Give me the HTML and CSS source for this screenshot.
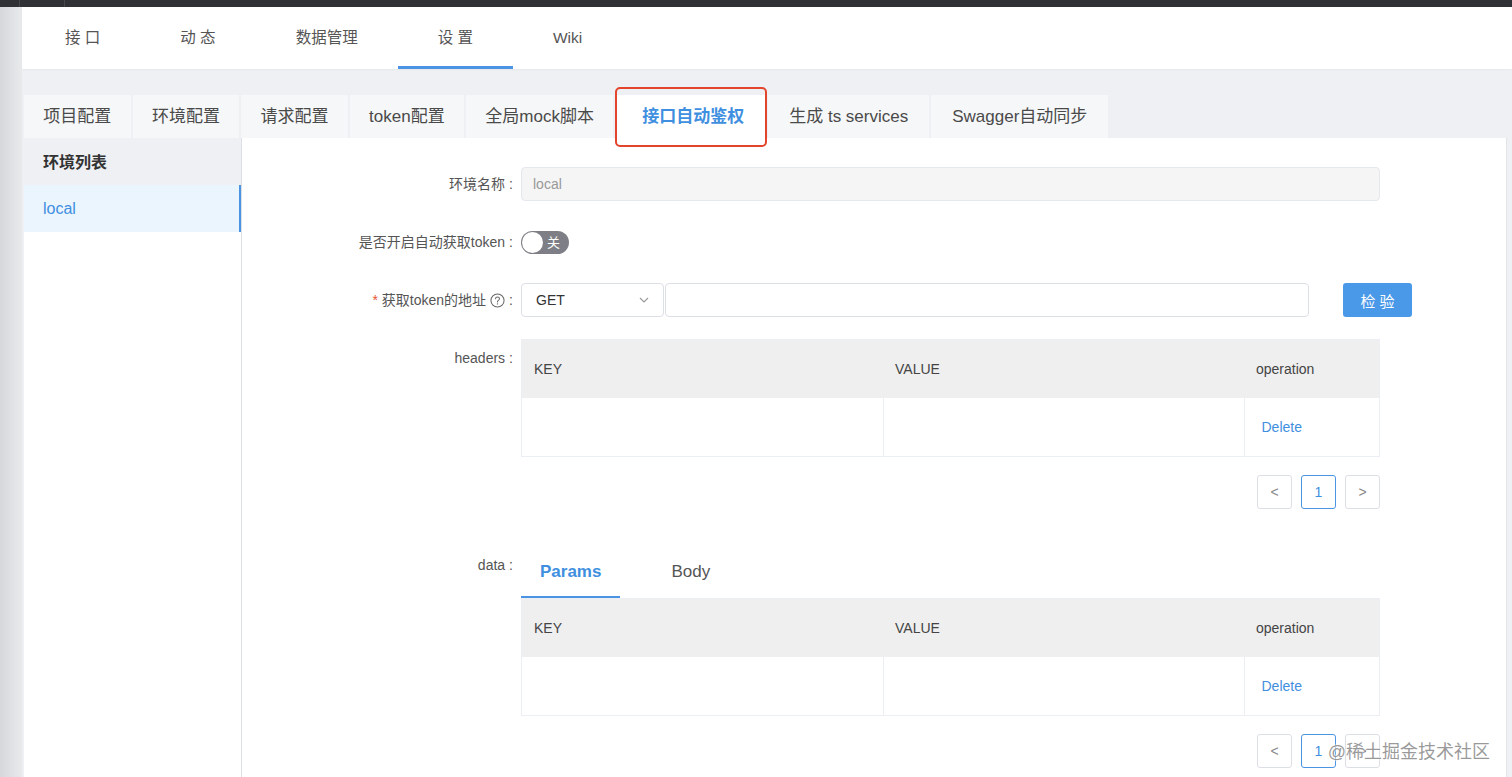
FILE: index.html
```html
<!DOCTYPE html>
<html lang="zh-CN">
<head>
    <meta charset="UTF-8">
    <title>设置 - 接口自动鉴权</title>
    <link rel="stylesheet" href="styles.css">
</head>
<body>

<div class="topbar">
    <span class="topbar-sep s1"></span>
    <span class="topbar-sep s2"></span>
</div>

<div class="frame">
    <div class="strip"></div>
    <div class="main">
        <div class="nav">
            <a class="nav-item">接 口</a>
            <a class="nav-item">动 态</a>
            <a class="nav-item">数据管理</a>
            <a class="nav-item active">设 置</a>
            <a class="nav-item">Wiki</a>
        </div>

        <div class="settings">
            <div class="tabs">
                <div class="tab">项目配置</div>
                <div class="tab">环境配置</div>
                <div class="tab">请求配置</div>
                <div class="tab">token配置</div>
                <div class="tab">全局mock脚本</div>
                <div class="tab active">接口自动鉴权<span class="mark"></span></div>
                <div class="tab wide">生成 ts services</div>
                <div class="tab wide">Swagger自动同步</div>
            </div>

            <div class="panel">
                <div class="env-list">
                    <div class="env-head">环境列表</div>
                    <div class="env-item selected">local</div>
                </div>

                <div class="form">
                    <div class="form-item">
                        <label class="form-label">环境名称<span class="colon">:</span></label>
                        <div class="form-control">
                            <div class="input disabled">local</div>
                        </div>
                    </div>

                    <div class="form-item">
                        <label class="form-label">是否开启自动获取token<span class="colon">:</span></label>
                        <div class="form-control">
                            <div class="switch">
                                <span class="switch-knob"></span>
                                <span class="switch-text">关</span>
                            </div>
                        </div>
                    </div>

                    <div class="form-item url-item">
                        <label class="form-label"><span class="required">*</span> 获取token的地址
                            <svg class="help" width="15" height="15" viewBox="0 0 16 16">
                                <circle cx="8" cy="8" r="7" fill="none" stroke="#666" stroke-width="1.1"/>
                                <path d="M5.9 6.2c0-1.2.9-2 2.1-2s2.1.8 2.1 1.9c0 .9-.5 1.3-1.2 1.8-.6.4-.9.7-.9 1.4v.4" fill="none" stroke="#666" stroke-width="1.1" stroke-linecap="round"/>
                                <circle cx="8" cy="11.6" r=".75" fill="#666"/>
                            </svg><span class="colon">:</span></label>
                        <div class="form-control url-row">
                            <div class="select">
                                <span>GET</span>
                                <svg width="12" height="12" viewBox="0 0 12 12"><path d="M2 4l4 4 4-4" fill="none" stroke="#999" stroke-width="1.1"/></svg>
                            </div>
                            <div class="input url"></div>
                            <button class="btn-primary">检 验</button>
                        </div>
                    </div>

                    <div class="form-item">
                        <label class="form-label top">headers<span class="colon">:</span></label>
                        <div class="form-control">
                            <table class="kv-table">
                                <thead>
                                    <tr><th class="c-key">KEY</th><th class="c-val">VALUE</th><th class="c-op">operation</th></tr>
                                </thead>
                                <tbody>
                                    <tr><td></td><td></td><td><a class="link">Delete</a></td></tr>
                                </tbody>
                            </table>
                            <div class="pager">
                                <span class="page-btn">&lt;</span>
                                <span class="page-btn current">1</span>
                                <span class="page-btn">&gt;</span>
                            </div>
                        </div>
                    </div>

                    <div class="form-item data-item">
                        <label class="form-label top">data<span class="colon">:</span></label>
                        <div class="form-control">
                            <div class="sub-tabs">
                                <div class="sub-tab active">Params</div>
                                <div class="sub-tab">Body</div>
                            </div>
                            <table class="kv-table">
                                <thead>
                                    <tr><th class="c-key">KEY</th><th class="c-val">VALUE</th><th class="c-op">operation</th></tr>
                                </thead>
                                <tbody>
                                    <tr><td></td><td></td><td><a class="link">Delete</a></td></tr>
                                </tbody>
                            </table>
                            <div class="pager">
                                <span class="page-btn">&lt;</span>
                                <span class="page-btn current">1</span>
                                <span class="page-btn">&gt;</span>
                            </div>
                        </div>
                    </div>
                </div>
            </div>
        </div>
    </div>
</div>

<div class="watermark">@稀土掘金技术社区</div>

</body>
</html>
```

FILE: styles.css
```css
html, body {
    margin: 0;
    height: 100%;
    overflow: hidden;
}

body {
    font-family: 'Liberation Sans', 'Noto Sans CJK SC', sans-serif;
    background-color: #eef0f3;
    color: #555;
}

.topbar {
    height: 7px;
    background-color: #2f3134;
    position: relative;
}

.topbar-sep {
    position: absolute;
    top: 0;
    width: 1px;
    height: 7px;
    background-color: #45474b;
}

.topbar-sep.s1 { left: 19px; }
.topbar-sep.s2 { left: 64px; }

.frame {
    display: flex;
    height: calc(100% - 7px);
}

.strip {
    width: 22px;
    flex: none;
    background: linear-gradient(to right, #d6d7da, #e9eaec);
}

.main {
    flex: 1;
    display: flex;
    flex-direction: column;
}

/* top menu */
.nav {
    height: 62px;
    background-color: #fff;
    display: flex;
    padding-left: 3px;
    box-shadow: 0 1px 2px rgba(0, 0, 0, 0.04);
}

.nav-item {
    padding: 0 40px;
    line-height: 62px;
    font-size: 15.5px;
    color: #555;
    border-bottom: 2px solid transparent;
    height: 60px;
}

.nav-item.active {
    border-bottom: 3px solid #4a94e3;
    height: 59px;
}

/* settings area */
.settings {
    flex: 1;
    padding: 26px 5px 0 2px;
    display: flex;
    flex-direction: column;
}

.tabs {
    display: flex;
    gap: 2px;
    height: 43px;
}

.tab {
    padding: 0 19.3px;
    line-height: 44px;
    font-size: 17px;
    color: #4a4a4a;
    background-color: #f6f7f8;
    position: relative;
}

.tab.wide {
    padding: 0 21px;
}

.tab.active {
    background-color: #fff;
    color: #3f8fe0;
    font-weight: 600;
    padding: 0 22px 0 25px;
    margin-left: 2px;
}

.mark {
    position: absolute;
    left: -2px;
    right: -1px;
    top: -8px;
    bottom: -9px;
    border: 2px solid #e3442c;
    border-radius: 5px;
}

.panel {
    flex: 1;
    background-color: #fff;
    display: flex;
    border-right: 1px solid #e3e4e6;
}

.env-list {
    width: 217px;
    flex: none;
    border-right: 1px solid #dcdfe6;
}

.env-head {
    height: 47px;
    line-height: 49px;
    padding-left: 19px;
    background-color: #eef0f3;
    font-size: 16px;
    font-weight: 700;
    color: #333;
}

.env-item {
    height: 47px;
    line-height: 47px;
    padding-left: 19px;
    font-size: 16px;
}

.env-item.selected {
    background-color: #ebf5fe;
    color: #3f8fe0;
    box-shadow: inset -2px 0 0 #4a94e3;
}

/* form */
.form {
    flex: 1;
    padding-top: 29px;
}

.form-item {
    display: flex;
    margin-bottom: 24px;
}

.url-item {
    margin-bottom: 22px;
}

.form-label {
    width: 271px;
    flex: none;
    padding-right: 8px;
    text-align: right;
    font-size: 14px;
    line-height: 34px;
    color: #555;
    display: flex;
    justify-content: flex-end;
    align-items: center;
}

.form-label.top {
    align-items: flex-start;
    line-height: 38px;
}

.colon {
    margin-left: 4px;
}

.required {
    color: #e8552f;
    margin-right: 4px;
}

.help {
    margin: 0 0 0 4px;
}

.form-control {
    width: 859px;
    flex: none;
}

.input {
    height: 32px;
    line-height: 32px;
    border: 1px solid #dcdfe6;
    border-radius: 4px;
    padding: 0 11px;
    font-size: 14px;
    color: #333;
    background-color: #fff;
}

.input.disabled {
    background-color: #f5f5f5;
    color: #999;
    border-color: #e4e7ed;
}

.switch {
    margin-top: 6px;
    width: 48px;
    height: 23px;
    border-radius: 12px;
    background-color: #7e7f86;
    position: relative;
}

.switch-knob {
    position: absolute;
    left: 1px;
    top: 1px;
    width: 21px;
    height: 21px;
    border-radius: 50%;
    background-color: #fff;
}

.switch-text {
    position: absolute;
    right: 9px;
    top: 0;
    line-height: 23px;
    font-size: 13px;
    color: #fff;
}

.url-row {
    display: flex;
    align-items: center;
}

.select {
    width: 143px;
    height: 34px;
    box-sizing: border-box;
    border: 1px solid #dcdfe6;
    border-radius: 4px;
    padding: 0 13px 0 14px;
    display: flex;
    align-items: center;
    justify-content: space-between;
    font-size: 14px;
    color: #333;
    flex: none;
}

.input.url {
    width: 620px;
    flex: none;
    margin-left: 1px;
}

.btn-primary {
    margin-left: 34px;
    width: 69px;
    height: 34px;
    flex: none;
    border: none;
    border-radius: 3px;
    background-color: #4a98e8;
    color: #fff;
    font-family: inherit;
    font-size: 15px;
}

/* key/value tables */
.kv-table {
    width: 100%;
    border-collapse: collapse;
    border: 1px solid #ebeef5;
    font-size: 14px;
}

.kv-table th {
    height: 58px;
    background-color: #efeff0;
    text-align: left;
    font-weight: 500;
    color: #444;
    padding: 0 12px;
}

.kv-table td {
    height: 58px;
    border-right: 1px solid #ebeef5;
    padding: 0 17px;
}

.kv-table td:last-child {
    border-right: none;
}

.c-key { width: 337px; }
.c-val { width: 337px; }

.link {
    color: #3f8fe0;
}

.pager {
    display: flex;
    justify-content: flex-end;
    gap: 9px;
    margin-top: 18px;
}

.page-btn {
    width: 33px;
    height: 32px;
    line-height: 32px;
    text-align: center;
    border: 1px solid #dcdfe6;
    border-radius: 3px;
    font-size: 14px;
    color: #888;
}

.page-btn.current {
    border-color: #4a94e3;
    color: #3f8fe0;
}

.data-item {
    margin-top: 37px;
}

.sub-tabs {
    display: flex;
    gap: 32px;
    height: 52px;
}

.sub-tab {
    padding: 0 19px;
    line-height: 52px;
    height: 50px;
    font-size: 17px;
    color: #555;
    border-bottom: 2px solid transparent;
}

.sub-tab.active {
    color: #3f8fe0;
    font-weight: 600;
    border-bottom-color: #4a94e3;
}

.watermark {
    position: absolute;
    right: 22px;
    bottom: 14px;
    font-size: 18px;
    color: rgba(120, 120, 120, 0.75);
    text-shadow: 0 0 2px #fff, 0 0 2px #fff;
}
```
